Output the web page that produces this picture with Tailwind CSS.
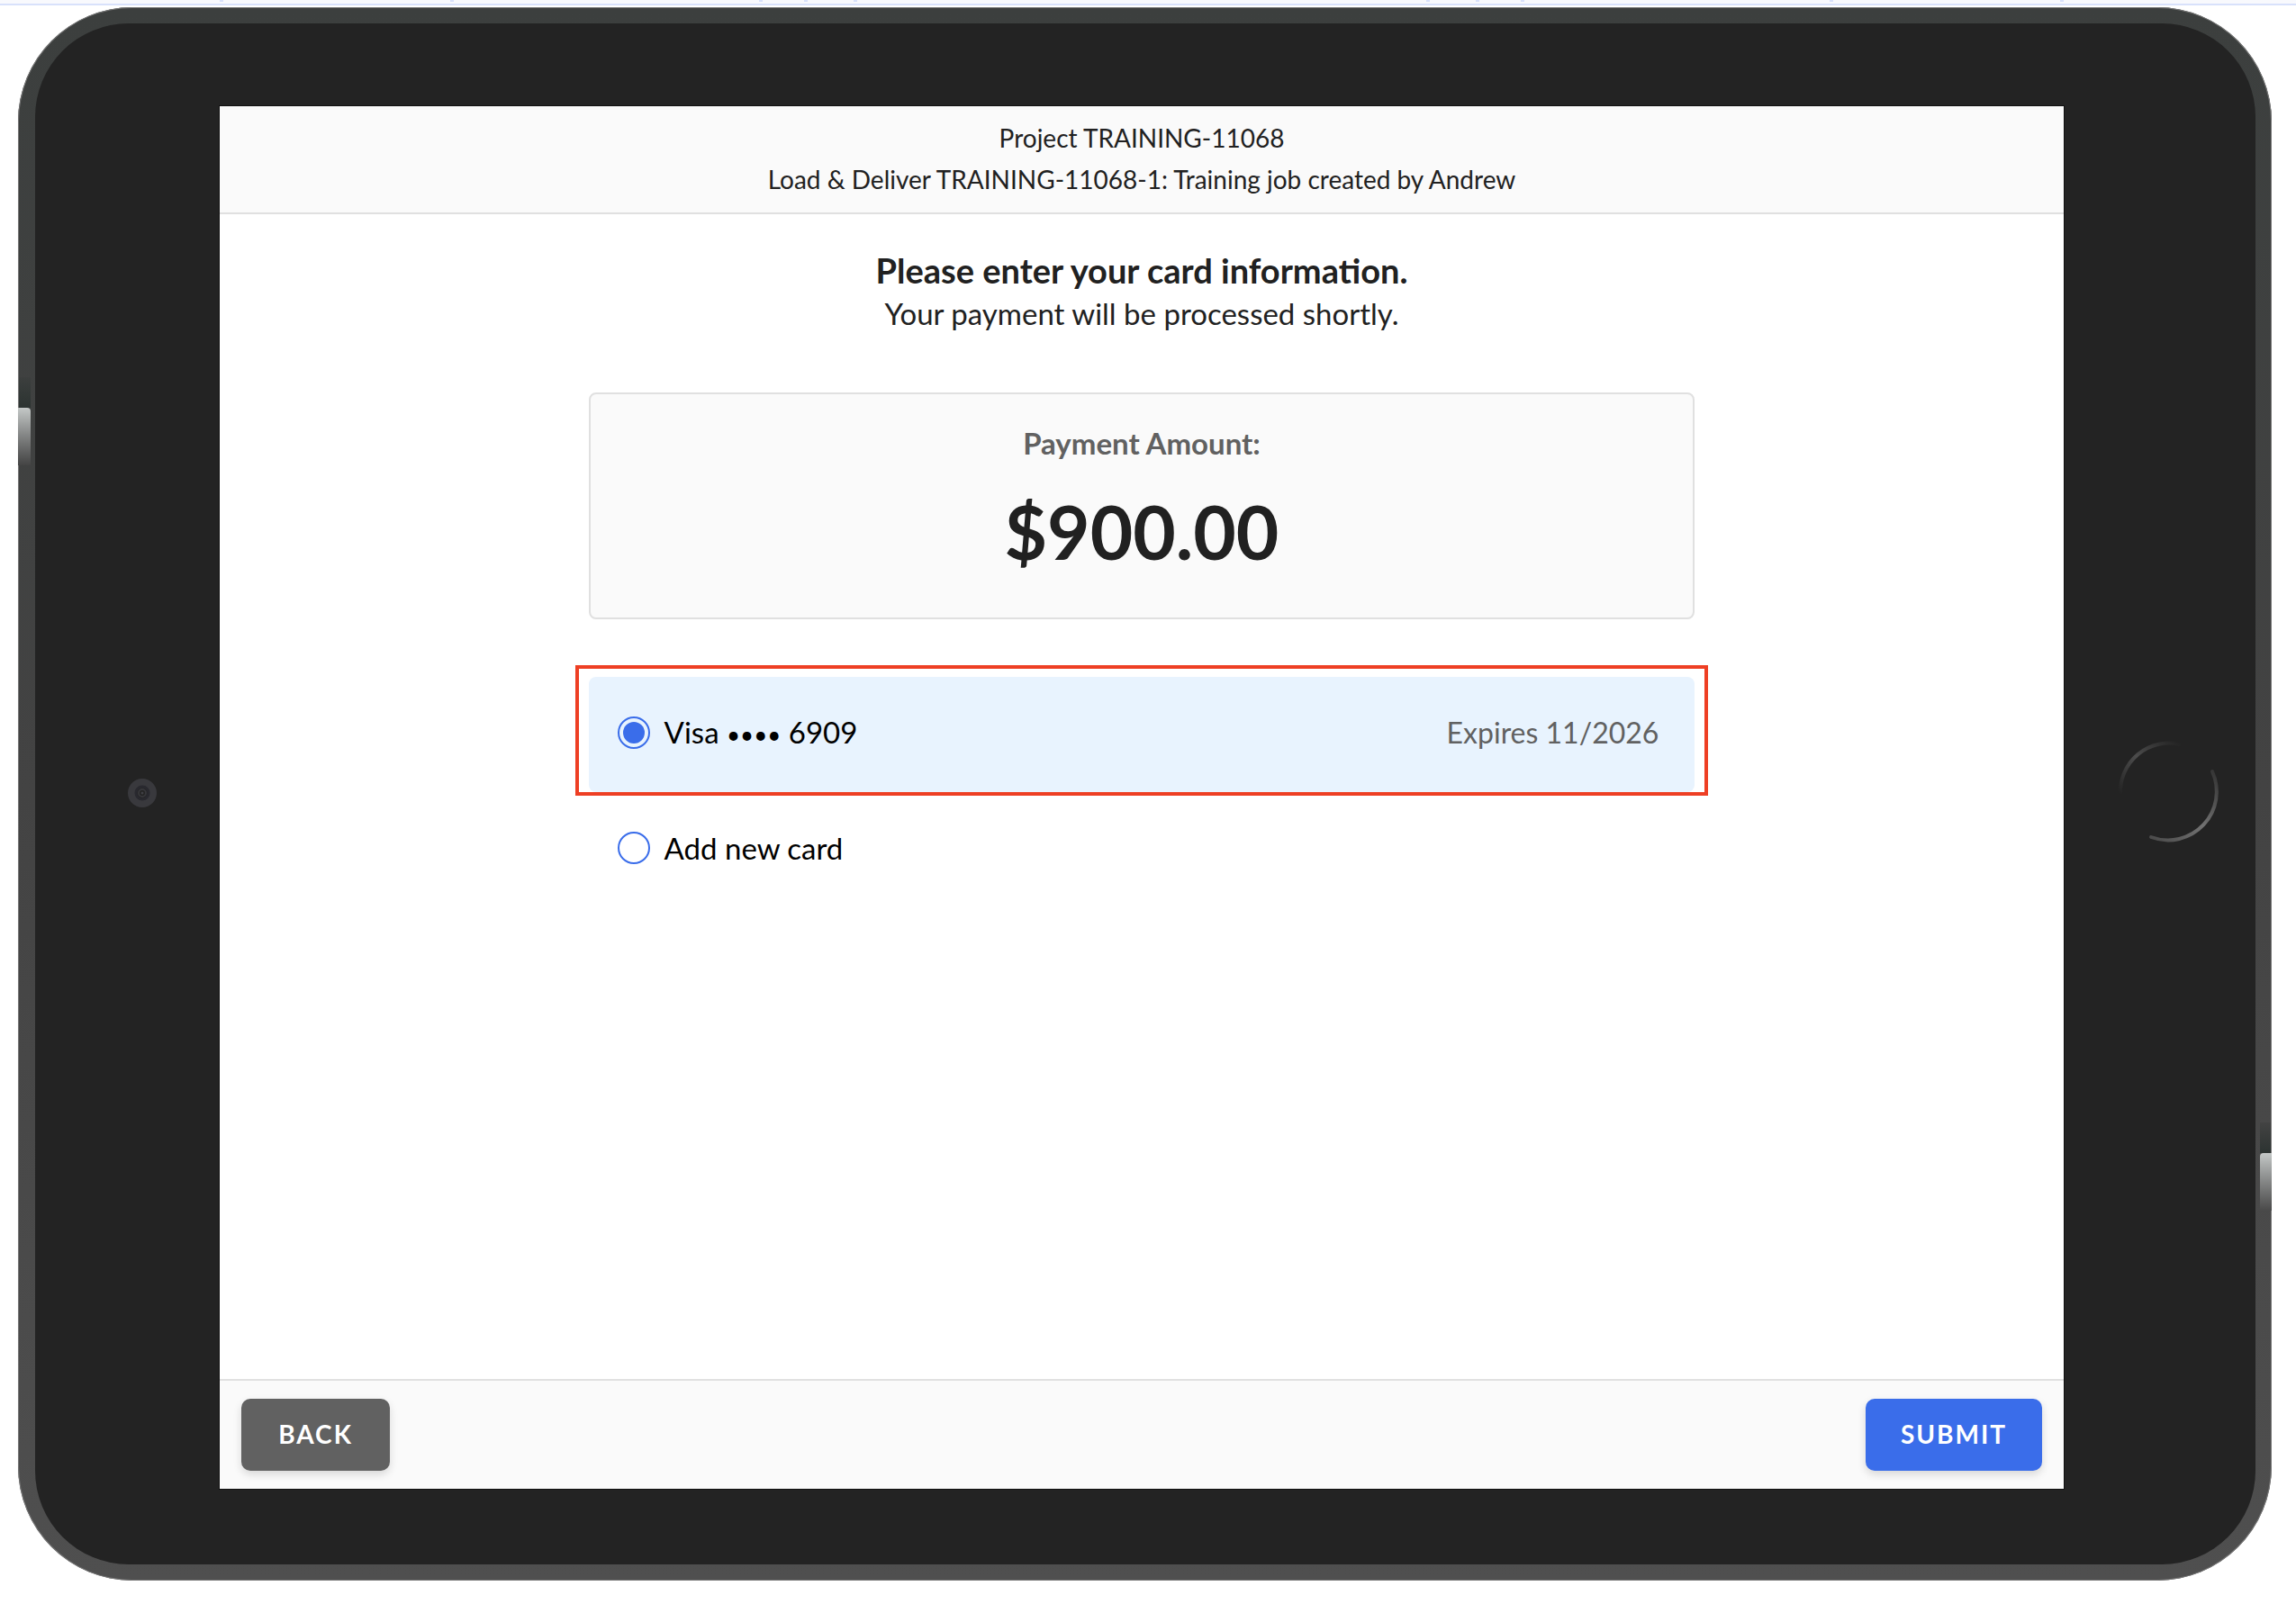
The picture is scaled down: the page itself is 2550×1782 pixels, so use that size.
<!DOCTYPE html>
<html lang="en">
<head>
<meta charset="utf-8">
<title>Card payment</title>
<script src="https://cdn.jsdelivr.net/npm/@tailwindcss/browser@4"></script>
</head>
<body class="bg-white font-['Lato',sans-serif] text-[#212121]">
<div class="h-[6px] border-b-2 border-[#d8e1fb] bg-[#f8f9fd]">
  <svg class="block h-[2px] w-full" viewBox="0 0 2550 2" preserveAspectRatio="none" aria-hidden="true">
    <path fill="#d8e1fb" d="M244 0h4v2h-4zM500 0h4v2h-4zM843 0h4v2h-4zM893 0h4v2h-4zM948 0h4v2h-4zM1584 0h4v2h-4zM1639 0h4v2h-4zM1689 0h4v2h-4zM2032 0h4v2h-4zM2288 0h4v2h-4z"/>
  </svg>
</div>

<div class="relative mt-[2px] mr-[27px] ml-[20px] rounded-[127px] bg-linear-to-b from-[#3c3f3e] via-[#434343] to-[#4f4f4f] pt-[18px] pr-[18px] pb-[18px] pl-[19px] shadow-[inset_0_0_0_1px_#777]">
  <!-- side keys -->
  <div class="absolute top-[411px] left-px h-[34px] w-[13px] bg-linear-to-b from-[#3c3f3e] to-[#2c3331]"></div>
  <div class="absolute top-[445px] left-0 h-[64px] w-[14px] rounded-tr-sm bg-linear-to-b from-[#c4c8c7] to-[#444]"></div>
  <div class="absolute top-[1239px] right-px h-[34px] w-[12px] bg-linear-to-b from-[#434343] to-[#2c3331]"></div>
  <div class="absolute top-[1273px] right-0 h-[64px] w-[13px] rounded-tl-sm bg-linear-to-b from-[#c4c8c7] to-[#4a4a4a]"></div>

  <div class="flex items-stretch rounded-[104px] bg-[#232323] pt-[92px] pb-[84px]">
    <!-- camera -->
    <div class="flex w-[205px] shrink-0 items-center justify-center pb-[10px] pl-[33px]">
      <svg class="size-[34px]" viewBox="0 0 34 34" fill="none" aria-hidden="true">
        <circle cx="17" cy="17" r="12" stroke="#39393d" stroke-width="8"/>
        <circle cx="17" cy="17" r="7" stroke="#29292f" stroke-width="3"/>
        <circle cx="17" cy="17" r="4" stroke="#37373b" stroke-width="2"/>
        <circle cx="17" cy="17" r="1.5" fill="#404045"/>
      </svg>
    </div>

    <div class="flex min-h-[1536px] grow flex-col bg-white shadow-[0_0_0_1px_#111]">
      <header class="border-b-2 border-[#e0e0e0] bg-[#fafafa] pt-[12px] pb-[14px] text-center text-[28px] leading-[46px]">
        <p>Project TRAINING-11068</p>
        <p>Load &amp; Deliver TRAINING-11068-1: Training job created by Andrew</p>
      </header>

      <main class="mx-auto w-3/5 grow pt-[38px]">
        <h1 class="text-center text-[38px] leading-[48px] font-bold">Please enter your card information.</h1>
        <p class="text-center text-[33px] leading-[48px]">Your payment will be processed shortly.</p>

        <section class="mt-[64px] rounded-lg border-2 border-[#e0e0e0] bg-[#fafafa] pt-[30px] pb-[48px] text-center">
          <h2 class="text-[33px] leading-[48px] font-bold text-[#616161]">Payment Amount:</h2>
          <p class="mt-[26px] text-[82px] leading-[96px] font-bold">$900.00</p>
        </section>

        <fieldset aria-label="Card" class="relative mt-[64px] text-[33px] leading-[48px] text-black">
          <label class="flex h-[128px] items-center rounded-lg bg-[#e8f3fe] pr-[40px] pb-[4px] pl-[32px]">
            <input type="radio" name="card" checked class="size-[36px] appearance-none rounded-full border-2 border-[#3a6dea] bg-clip-content p-[4px] checked:bg-[#3a6dea]">
            <span class="ml-[16px]">Visa <span class="text-[26px]">••••</span> 6909</span>
            <span class="ml-auto text-[32px] text-[#616161]">Expires 11/2026</span>
          </label>
          <label class="flex h-[128px] items-center rounded-lg pr-[40px] pb-[4px] pl-[32px]">
            <input type="radio" name="card" class="size-[36px] appearance-none rounded-full border-2 border-[#3a6dea] bg-clip-content p-[4px] checked:bg-[#3a6dea]">
            <span class="ml-[16px]">Add new card</span>
          </label>
          <div class="pointer-events-none absolute -inset-x-[15px] -top-[13px] h-[145px] border-4 border-[#ee3f24]"></div>
        </fieldset>
      </main>

      <footer class="flex items-center justify-between border-t-2 border-[#e0e0e0] bg-[#fafafa] px-[24px] py-[20px] text-[28px] font-bold text-white">
        <button type="button" class="h-[80px] w-[165px] rounded-[10px] bg-[#616161] pb-[2px] tracking-[2px] shadow-[0_4px_10px_#00000024]">BACK</button>
        <button type="submit" class="h-[80px] w-[196px] rounded-[10px] bg-[#3a6dea] pb-[2px] tracking-[2px] shadow-[0_4px_10px_#00000024]">SUBMIT</button>
      </footer>
    </div>

    <!-- home button -->
    <div class="flex w-[213px] shrink-0 items-center justify-center pb-[12px] pl-[21px]">
      <svg class="size-[120px]" viewBox="0 0 120 120" fill="none" stroke-linecap="round" aria-hidden="true">
        <defs>
          <linearGradient id="tl" x1="0" y1="1" x2="1" y2="0"><stop offset="0" stop-color="#232323"/><stop offset=".5" stop-color="#4c4c4c"/><stop offset="1" stop-color="#232323"/></linearGradient>
          <linearGradient id="br" x1="0" y1="1" x2="1" y2="0"><stop offset="0" stop-color="#4a4a4a"/><stop offset=".5" stop-color="#727272"/><stop offset="1" stop-color="#333"/></linearGradient>
        </defs>
        <path d="M6 62A54 54 0 0 1 72 7" stroke="url(#tl)" stroke-width="4"/>
        <path d="M108 37A54 54 0 0 1 40 110" stroke="url(#br)" stroke-width="4"/>
      </svg>
    </div>
  </div>
</div>
</body>
</html>
